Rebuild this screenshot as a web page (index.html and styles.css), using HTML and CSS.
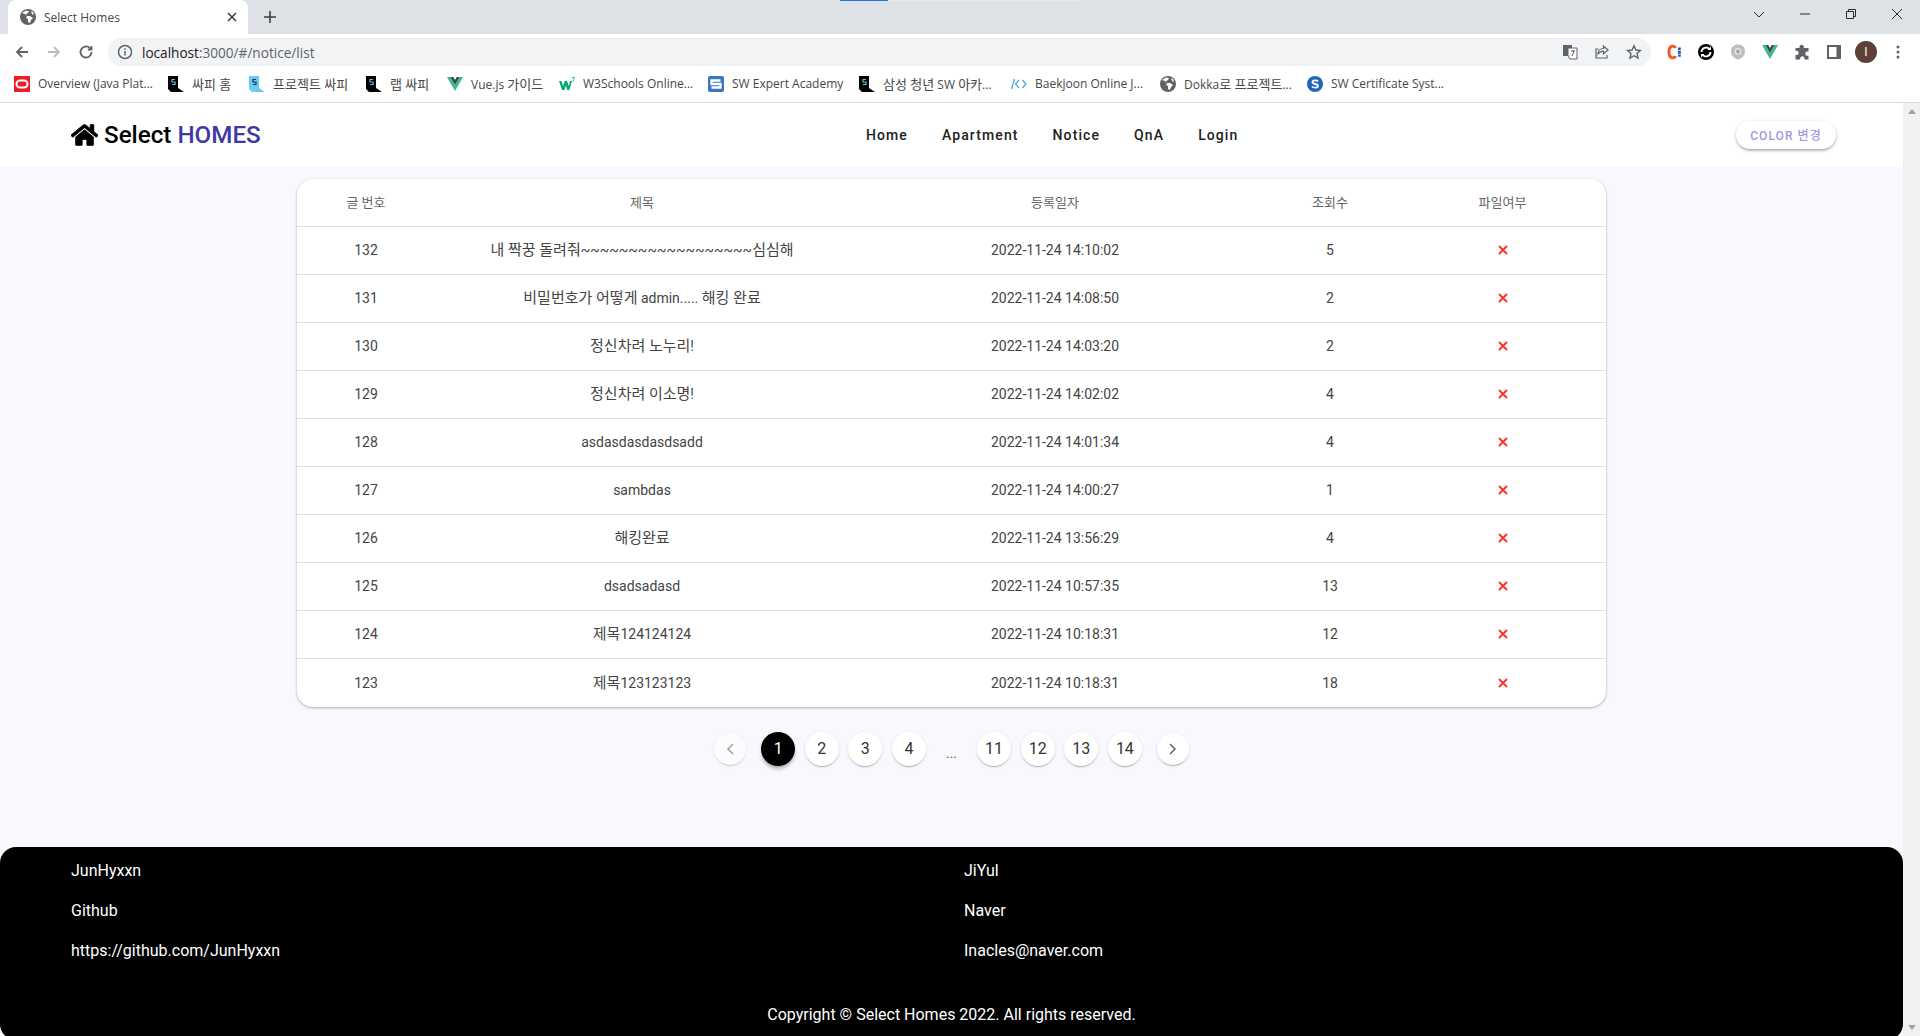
FILE: index.html
```html
<!DOCTYPE html>
<html lang="ko">
<head>
    <meta charset="UTF-8">
    <title>Select Homes</title>
    <link rel="stylesheet" href="styles.css">
</head>
<body>
    <svg class="sprites" width="0" height="0">
        <symbol id="globe" viewBox="0 0 16 16">
            <circle cx="8" cy="8" r="8" fill="#5f6368"/>
            <path d="M2 4l3 1 2 2-1 2 2 1v3l2 1 1-3 2-2-3-2-3 0-1-2 2-1 1-2-3-.5z M11 2l1 3 2 1-1-3z" fill="#fff"/>
        </symbol>
        <symbol id="ssafy" viewBox="0 0 16 16">
            <path d="M0 0h10v12l6 4H3l-3-3z" fill="#000"/>
            <path d="M7 3.500H4v2.500h3v2.500H4" fill="none" stroke="#5bc4e8" stroke-width="1.200"/>
        </symbol>
        <symbol id="ssafy-light" viewBox="0 0 16 16">
            <path d="M0 0h10v12l6 4H3l-3-3z" fill="#6ccbf0"/>
            <path d="M7 3.500H4v2.500h3v2.500H4" fill="none" stroke="#063a50" stroke-width="1.200"/>
        </symbol>
        <symbol id="vue" viewBox="0 0 16 16">
            <path d="M0 1h3.500L8 9l4.500-8H16L8 15z" fill="#41b883"/>
            <path d="M3.500 1h2.800L8 4l1.700-3h2.800L8 9z" fill="#35495e"/>
        </symbol>
    </svg>

    <div class="tabstrip">
        <div class="tab">
            <svg class="favicon"><use href="#globe"/></svg>
            <span class="tab-title">Select Homes</span>
            <svg class="tab-close" viewBox="0 0 10 10"><path d="M1 1l8 8M9 1l-8 8"/></svg>
        </div>
        <svg class="tab-new" viewBox="0 0 12 12"><path d="M6 0v12M0 6h12"/></svg>
        <div class="loadbar"><span></span></div>
        <div class="winbtns">
            <svg viewBox="0 0 12 12"><path d="M1 4l5 5 5-5"/></svg>
            <svg viewBox="0 0 12 12"><path d="M1 6h10"/></svg>
            <svg viewBox="0 0 12 12"><path d="M1.500 3.500h7v7h-7zM3.500 3.500v-2h7v7h-2"/></svg>
            <svg viewBox="0 0 12 12"><path d="M1 1l10 10M11 1L1 11"/></svg>
        </div>
    </div>

    <div class="toolbar">
        <svg class="tool" viewBox="0 0 16 16"><path d="M14 8H3M8 3L3 8l5 5"/></svg>
        <svg class="tool off" viewBox="0 0 16 16"><path d="M2 8h11M8 3l5 5-5 5"/></svg>
        <svg class="tool" viewBox="0 0 16 16"><path d="M13.500 8a5.500 5.500 0 1 1-1.600-3.900L13.500 5.700M13.500 2v3.700H9.800"/></svg>
        <div class="omnibox">
            <svg class="info" viewBox="0 0 16 16"><circle cx="8" cy="8" r="6.500"/><path d="M8 7v4.500M8 4.300v1.500"/></svg>
            <span class="url">localhost<span class="url-path">:3000/#/notice/list</span></span>
            <div class="omni-icons">
                <svg viewBox="0 0 16 16"><rect x="1" y="1" width="9" height="11" fill="#5f6368"/><path d="M6 4h9v11H8L6 12z" fill="#fff" stroke="#5f6368" stroke-width="1"/><path d="M9 7h4M11 6v1M10 12l2-5" fill="none" stroke="#5f6368" stroke-width="1"/></svg>
                <svg viewBox="0 0 16 16"><path d="M14 6L9.500 2v2.500C6 4.500 4 7 4 10c1.500-2 3-2.800 5.500-2.800V10zM13 11v3H2V5h2.500" fill="none" stroke="#5f6368" stroke-width="1.200"/></svg>
                <svg viewBox="0 0 16 16"><path d="M8 1.800l1.900 4.200 4.500.5-3.400 3 1 4.500-4-2.300-4 2.300 1-4.500-3.400-3 4.500-.5z" fill="none" stroke="#5f6368" stroke-width="1.400"/></svg>
            </div>
        </div>
        <div class="extensions">
            <svg viewBox="0 0 16 16"><path d="M9.500 4C8.800 1.500 3 .5 3 8s5.800 6.500 6.500 4" fill="none" stroke="#f05a28" stroke-width="3"/><rect x="12" y="3.500" width="2.800" height="2.800" fill="#1f5fa8"/><rect x="12" y="7" width="2.800" height="2.800" fill="#1f5fa8"/><rect x="12" y="10.500" width="2.800" height="2.200" fill="#1f5fa8"/></svg>
            <svg viewBox="0 0 16 16"><circle cx="8" cy="8" r="8" fill="#000"/><path d="M3.500 8a4.500 4.500 0 0 1 8-2.800M12.500 8a4.500 4.500 0 0 1-8 2.800" fill="none" stroke="#fff" stroke-width="1.800"/><path d="M9.500 6h3.500V2.500zM6.500 10H3v3.500z" fill="#fff"/></svg>
            <svg viewBox="0 0 16 16"><path d="M8 .5c4 0 7 2.500 7 7 0 4-3.500 7-7 8-3.500-1-7-4-7-8 0-4.500 3-7 7-7z" fill="#bdbdbd"/><circle cx="8" cy="7.500" r="3.500" fill="#e4e4e4"/><path d="M8 5.500a2 2 0 0 1 2 2c0 1.200-1 1.800-2 2.500-1-.7-2-1.300-2-2.500a2 2 0 0 1 2-2z" fill="#a8a8a8"/></svg>
            <svg><use href="#vue"/></svg>
            <svg viewBox="0 0 16 16"><path d="M5.500 2.500a2.200 2.200 0 0 1 4.300 0V4H14.500v3.500H13a2.200 2.200 0 0 0 0 4.300h1.500V15.500H10.500V14a2.200 2.200 0 0 0-4.300 0v1.500H1.500v-4.500H3a2.200 2.200 0 0 0 0-4.300H1.500V4h4z" fill="#5f6368"/></svg>
            <svg viewBox="0 0 16 16"><path d="M1 1h14v14H1z" fill="#5f6368"/><path d="M3 3h7.500v10H3z" fill="#fff"/></svg>
            <div class="avatar">I</div>
            <svg viewBox="0 0 16 16"><circle cx="8" cy="3" r="1.500" fill="#5f6368"/><circle cx="8" cy="8" r="1.500" fill="#5f6368"/><circle cx="8" cy="13" r="1.500" fill="#5f6368"/></svg>
        </div>
    </div>

    <div class="bookmarks">
        <div class="bookmark">
            <svg viewBox="0 0 16 16"><rect width="16" height="16" fill="#ee1c25"/><rect x="2.500" y="4.500" width="11" height="7" rx="3.500" fill="none" stroke="#fff" stroke-width="2"/></svg>
            <span>Overview (Java Plat...</span>
        </div>
        <div class="bookmark"><svg><use href="#ssafy"/></svg><span class="ko">싸피 홈</span></div>
        <div class="bookmark"><svg><use href="#ssafy-light"/></svg><span class="ko">프로젝트 싸피</span></div>
        <div class="bookmark"><svg><use href="#ssafy"/></svg><span class="ko">랩 싸피</span></div>
        <div class="bookmark"><svg><use href="#vue"/></svg><span>Vue.js <span class="ko">가이드</span></span></div>
        <div class="bookmark">
            <svg viewBox="0 0 16 16"><path d="M0 5h2.600l1.400 5 1.800-5h2.200l1.800 5 1.400-5H13l-2.700 9H8.200L6.900 9.500 5.500 14H3z" fill="#04aa6d"/><path d="M13 1.500h2.500l-1 1.500c1 .5 .5 2.500-1.500 2" fill="none" stroke="#04aa6d" stroke-width=".8"/></svg>
            <span>W3Schools Online...</span>
        </div>
        <div class="bookmark">
            <svg viewBox="0 0 16 16"><rect width="16" height="16" rx="2" fill="#3d74c5"/><path d="M12.500 4.500h-9v3.500h9v3.500h-9" fill="none" stroke="#fff" stroke-width="2.400"/></svg>
            <span>SW Expert Academy</span>
        </div>
        <div class="bookmark"><svg><use href="#ssafy"/></svg><span><span class="ko">삼성 청년</span> SW <span class="ko">아카</span>...</span></div>
        <div class="bookmark">
            <svg viewBox="0 0 16 16"><path d="M3.500 3L.500 13M8 4L4.500 8 8 12M11.500 4L15 8l-3.500 4" fill="none" stroke="#4b9fd5" stroke-width="1.200"/></svg>
            <span>Baekjoon Online J...</span>
        </div>
        <div class="bookmark"><svg><use href="#globe"/></svg><span>Dokka<span class="ko">로 프로젝트</span>...</span></div>
        <div class="bookmark">
            <svg viewBox="0 0 16 16"><circle cx="8" cy="8" r="8" fill="#2166b8"/><path d="M11 5.500C10 4 5.500 4 5.500 6.300c0 2.400 5.500 1 5.500 3.500 0 2.300-4.500 2.300-6 .7" fill="none" stroke="#fff" stroke-width="1.800"/></svg>
            <span>SW Certificate Syst...</span>
        </div>
    </div>

    <div class="viewport">
        <div class="page">
            <header class="site-header">
                <div class="logo">
                    <svg class="logo-icon" viewBox="0 0 576 512"><path d="M280 148L96 300v164a16 16 0 0 0 16 16l112-.3a16 16 0 0 0 16-16V368a16 16 0 0 1 16-16h64a16 16 0 0 1 16 16v96a16 16 0 0 0 16 16l112 .3a16 16 0 0 0 16-16V300L296 148a12 12 0 0 0-16 0zM572 251l-84-69V44a12 12 0 0 0-12-12h-56a12 12 0 0 0-12 12v72l-90-74a48 48 0 0 0-61 0L4 251a12 12 0 0 0-2 17l26 31a12 12 0 0 0 17 2l235-194a12 12 0 0 1 16 0l235 194a12 12 0 0 0 17-2l26-31a12 12 0 0 0-2-17z"/></svg>
                    <span>Select <span class="logo-accent">HOMES</span></span>
                </div>
                <nav class="site-nav">
                    <a>Home</a>
                    <a>Apartment</a>
                    <a>Notice</a>
                    <a>QnA</a>
                    <a>Login</a>
                </nav>
                <button class="color-btn">COLOR 변경</button>
            </header>

            <main class="content">
                <div class="table-card">
                    <table class="notice-table">
                        <thead>
                            <tr>
                                <th class="col-no">글 번호</th>
                                <th class="col-title">제목</th>
                                <th class="col-date">등록일자</th>
                                <th class="col-hit">조회수</th>
                                <th>파일여부</th>
                            </tr>
                        </thead>
                        <tbody>
                            <tr><td>132</td><td><span class="ko-cell">내 짝꿍 돌려줘</span>~~~~~~~~~~~~~~~~~~<span class="ko-cell">심심해</span></td><td>2022-11-24 14:10:02</td><td>5</td><td><svg class="no-file" viewBox="0 0 10 10"><path d="M1 1l8 8M9 1l-8 8"/></svg></td></tr>
                            <tr><td>131</td><td><span class="ko-cell">비밀번호가 어떻게</span> admin..... <span class="ko-cell">해킹 완료</span></td><td>2022-11-24 14:08:50</td><td>2</td><td><svg class="no-file" viewBox="0 0 10 10"><path d="M1 1l8 8M9 1l-8 8"/></svg></td></tr>
                            <tr><td>130</td><td><span class="ko-cell">정신차려 노누리</span>!</td><td>2022-11-24 14:03:20</td><td>2</td><td><svg class="no-file" viewBox="0 0 10 10"><path d="M1 1l8 8M9 1l-8 8"/></svg></td></tr>
                            <tr><td>129</td><td><span class="ko-cell">정신차려 이소명</span>!</td><td>2022-11-24 14:02:02</td><td>4</td><td><svg class="no-file" viewBox="0 0 10 10"><path d="M1 1l8 8M9 1l-8 8"/></svg></td></tr>
                            <tr><td>128</td><td>asdasdasdasdsadd</td><td>2022-11-24 14:01:34</td><td>4</td><td><svg class="no-file" viewBox="0 0 10 10"><path d="M1 1l8 8M9 1l-8 8"/></svg></td></tr>
                            <tr><td>127</td><td>sambdas</td><td>2022-11-24 14:00:27</td><td>1</td><td><svg class="no-file" viewBox="0 0 10 10"><path d="M1 1l8 8M9 1l-8 8"/></svg></td></tr>
                            <tr><td>126</td><td><span class="ko-cell">해킹완료</span></td><td>2022-11-24 13:56:29</td><td>4</td><td><svg class="no-file" viewBox="0 0 10 10"><path d="M1 1l8 8M9 1l-8 8"/></svg></td></tr>
                            <tr><td>125</td><td>dsadsadasd</td><td>2022-11-24 10:57:35</td><td>13</td><td><svg class="no-file" viewBox="0 0 10 10"><path d="M1 1l8 8M9 1l-8 8"/></svg></td></tr>
                            <tr><td>124</td><td><span class="ko-cell">제목</span>124124124</td><td>2022-11-24 10:18:31</td><td>12</td><td><svg class="no-file" viewBox="0 0 10 10"><path d="M1 1l8 8M9 1l-8 8"/></svg></td></tr>
                            <tr><td>123</td><td><span class="ko-cell">제목</span>123123123</td><td>2022-11-24 10:18:31</td><td>18</td><td><svg class="no-file" viewBox="0 0 10 10"><path d="M1 1l8 8M9 1l-8 8"/></svg></td></tr>
                        </tbody>
                    </table>
                </div>

                <div class="pagination">
                    <button class="page-nav off"><svg viewBox="0 0 10 14"><path d="M8 2L3 7l5 5"/></svg></button>
                    <button class="page-item active">1</button>
                    <button class="page-item">2</button>
                    <button class="page-item">3</button>
                    <button class="page-item">4</button>
                    <span class="page-more">...</span>
                    <button class="page-item">11</button>
                    <button class="page-item">12</button>
                    <button class="page-item">13</button>
                    <button class="page-item">14</button>
                    <button class="page-nav"><svg viewBox="0 0 10 14"><path d="M2 2l5 5-5 5"/></svg></button>
                </div>
            </main>

            <footer class="site-footer">
                <div class="footer-cols">
                    <div class="footer-col">
                        <p>JunHyxxn</p>
                        <p>Github</p>
                        <p>https://github.com/JunHyxxn</p>
                    </div>
                    <div class="footer-col">
                        <p>JiYul</p>
                        <p>Naver</p>
                        <p>Inacles@naver.com</p>
                    </div>
                </div>
                <p class="copyright">Copyright © Select Homes 2022. All rights reserved.</p>
            </footer>
        </div>
        <div class="scrollbar">
            <span class="arrow-up"></span>
            <span class="arrow-down"></span>
        </div>
    </div>
</body>
</html>
```

FILE: styles.css
```css
* {
    box-sizing: border-box;
}
html, body {
    margin: 0;
    height: 1036px;
    overflow: hidden;
}
body {
    font-family: Roboto, "Noto Sans CJK KR", sans-serif;
    background: #ffffff;
    display: flex;
    flex-direction: column;
}
.sprites {
    position: absolute;
}

/* browser chrome */
.tabstrip {
    height: 34px;
    flex: none;
    background: #dee1e6;
    display: flex;
    align-items: flex-start;
    position: relative;
    padding-left: 8px;
}
.tab {
    width: 240px;
    height: 34px;
    background: #ffffff;
    border-radius: 8px 8px 0 0;
    display: flex;
    align-items: center;
    padding-left: 12px;
    font-family: "Open Sans", "Noto Sans CJK KR", sans-serif;
    font-size: 12px;
    color: #45474a;
}
.favicon {
    width: 16px;
    height: 16px;
    margin-right: 8px;
}
.tab-title {
    flex: 1;
}
.tab-close {
    width: 10px;
    height: 10px;
    margin-right: 11px;
    fill: none;
    stroke: #3c4043;
    stroke-width: 1.6;
}
.tab-new {
    width: 12px;
    height: 12px;
    margin: 11px 0 0 16px;
    fill: none;
    stroke: #3c4043;
    stroke-width: 1.6;
}
.loadbar {
    position: absolute;
    left: 840px;
    top: 0;
    width: 240px;
    height: 1px;
    background: #e6e8eb;
}
.loadbar span {
    display: block;
    width: 48px;
    height: 1px;
    background: #1a73e8;
}
.winbtns {
    margin-left: auto;
    display: flex;
    gap: 34px;
    padding: 8px 17px 0 0;
}
.winbtns svg {
    width: 12px;
    height: 12px;
    fill: none;
    stroke: #2b2b2b;
    stroke-width: 1;
}

.toolbar {
    height: 32px;
    flex: none;
    background: #ffffff;
    display: flex;
    align-items: center;
    padding: 4px 0 0 14px;
}
.tool {
    width: 16px;
    height: 16px;
    margin-right: 16px;
    fill: none;
    stroke: #5f6368;
    stroke-width: 1.800;
}
.tool.off {
    stroke: #babcbe;
}
.omnibox {
    width: 1543px;
    height: 28px;
    margin-left: -2px;
    background: #f1f3f4;
    border-radius: 14px;
    display: flex;
    align-items: center;
    padding-left: 9px;
    font-family: "Open Sans", "Noto Sans CJK KR", sans-serif;
    font-size: 13.6px;
    color: #202124;
}
.info {
    width: 16px;
    height: 16px;
    margin-right: 9px;
    fill: none;
    stroke: #5f6368;
    stroke-width: 1.500;
}
.url-path {
    color: #5f6368;
}
.omni-icons {
    margin-left: auto;
    display: flex;
    gap: 16px;
    padding-right: 9px;
}
.omni-icons svg {
    width: 16px;
    height: 16px;
}
.extensions {
    display: flex;
    align-items: center;
    gap: 16px;
    padding-left: 15px;
}
.extensions svg {
    width: 16px;
    height: 16px;
}
.avatar {
    width: 22px;
    height: 22px;
    margin: 0 -3px;
    border-radius: 50%;
    background: #5d4037;
    color: #ffffff;
    font-size: 12px;
    text-align: center;
    line-height: 22px;
}

.bookmarks {
    height: 37px;
    flex: none;
    background: #ffffff;
    border-bottom: 1px solid #dadce0;
    display: grid;
    grid-template-columns: 154px 81px 117px 81px 112px 149px 151px 152px 149px 147px auto;
    align-items: center;
    padding: 0 0 1px 14px;
    font-family: "Open Sans", "Noto Sans CJK KR", sans-serif;
    font-size: 12px;
    color: #45474a;
}
.bookmark {
    display: flex;
    align-items: center;
    gap: 8px;
    white-space: nowrap;
}
.bookmark svg {
    width: 16px;
    height: 16px;
    flex: none;
}
.ko {
    font-size: 13px;
}

/* page */
.viewport {
    flex: 1;
    display: flex;
    min-height: 0;
}
.page {
    flex: 1;
    min-width: 0;
    background: #f8f9fe;
    display: flex;
    flex-direction: column;
    overflow: hidden;
}
.scrollbar {
    width: 17px;
    flex: none;
    background: #f1f1f1;
    display: flex;
    flex-direction: column;
    justify-content: space-between;
    align-items: center;
    padding: 6px 0;
}
.arrow-up {
    border: 4px solid transparent;
    border-top: 0;
    border-bottom: 5px solid #a3a3a3;
}
.arrow-down {
    border: 4px solid transparent;
    border-bottom: 0;
    border-top: 5px solid #a3a3a3;
}

.site-header {
    height: 64px;
    flex: none;
    background: #ffffff;
    display: flex;
    align-items: center;
    padding: 0 67px 0 71px;
}
.logo {
    width: 795px;
    display: flex;
    align-items: center;
    gap: 6px;
    font-size: 24.2px;
    font-weight: 500;
    color: #000000;
}
.logo-icon {
    width: 27px;
    height: 24px;
    fill: #000000;
    stroke: #000000;
    stroke-width: 14;
}
.logo-accent {
    color: #3f3aa0;
}
.site-nav {
    display: flex;
    gap: 34px;
    font-size: 14px;
    font-weight: 500;
    letter-spacing: 1.1px;
    color: #222222;
}
.color-btn {
    margin-left: auto;
    width: 100px;
    height: 28px;
    padding: 0 0 1px;
    border: none;
    border-radius: 14px;
    background: #ffffff;
    box-shadow: 0 2px 3px -1px rgba(0, 0, 0, 0.35), 0 1px 4px rgba(0, 0, 0, 0.14);
    font-family: Roboto, "Noto Sans CJK KR", sans-serif;
    font-size: 12px;
    font-weight: 500;
    letter-spacing: 1.07px;
    color: #9f99da;
}

.content {
    height: 680px;
    flex: none;
    padding-top: 12px;
    display: flex;
    flex-direction: column;
    align-items: center;
}
.table-card {
    width: 1309px;
    background: #ffffff;
    border-radius: 16px;
    box-shadow: 0 1px 3px rgba(0, 0, 0, 0.3);
    overflow: hidden;
}
.notice-table {
    width: 100%;
    border-collapse: collapse;
    table-layout: fixed;
    text-align: center;
}
.notice-table th {
    height: 47px;
    padding: 0 0 2px;
    font-size: 13px;
    font-weight: 400;
    color: #666666;
    border-bottom: 1px solid #e0e0e0;
}
.col-no { width: 138px; }
.col-title { width: 414px; }
.col-date { width: 412px; }
.col-hit { width: 138px; }
.notice-table td {
    height: 48px;
    padding: 0;
    font-size: 14px;
    color: #444444;
    border-bottom: 1px solid #e0e0e0;
}
.notice-table tr:last-child td {
    height: 49px;
    padding-top: 1px;
    border-bottom: none;
}
.ko-cell {
    font-size: 15px;
    line-height: 0;
}
.no-file {
    width: 10px;
    height: 10px;
    display: block;
    margin: 0 auto;
    fill: none;
    stroke: #ff2b2b;
    stroke-width: 1.800;
}

.pagination {
    margin-top: 21px;
    display: flex;
    align-items: center;
}
.page-item, .page-nav, .page-more {
    margin: 0 4.8px;
}
.page-item, .page-nav {
    padding: 0;
    border: none;
    border-radius: 50%;
    background: #ffffff;
    box-shadow: 0 2px 1px -1px rgba(0, 0, 0, 0.2), 0 1px 3px rgba(0, 0, 0, 0.14);
    font-family: Roboto, sans-serif;
    color: #333333;
}
.page-item {
    width: 34px;
    height: 34px;
    font-size: 16px;
}
.page-item.active {
    background: #000000;
    color: #ffffff;
    box-shadow: 0 3px 4px -1px rgba(0, 0, 0, 0.4);
}
.page-nav {
    width: 32px;
    height: 32px;
    margin: 4.8px 10px;
}
.page-nav svg {
    width: 10px;
    height: 14px;
    display: block;
    margin: 0 auto;
    fill: none;
    stroke: #666666;
    stroke-width: 1.500;
}
.page-nav.off {
    opacity: 0.6;
}
.page-more {
    width: 32px;
    height: 34px;
    font-size: 14px;
    color: #555555;
    text-align: center;
    line-height: 42px;
}

.site-footer {
    height: 193px;
    flex: none;
    background: #000000;
    border-radius: 16px;
    color: #ffffff;
    font-size: 16px;
    padding: 14px 0 0 71px;
}
.footer-cols {
    display: flex;
    height: 144px;
}
.footer-col {
    width: 893px;
    display: flex;
    flex-direction: column;
    gap: 21px;
}
.footer-col p {
    margin: 0;
    line-height: 19px;
}
.copyright {
    margin: 0 0 0 -71px;
    text-align: center;
    line-height: 19px;
}
```
